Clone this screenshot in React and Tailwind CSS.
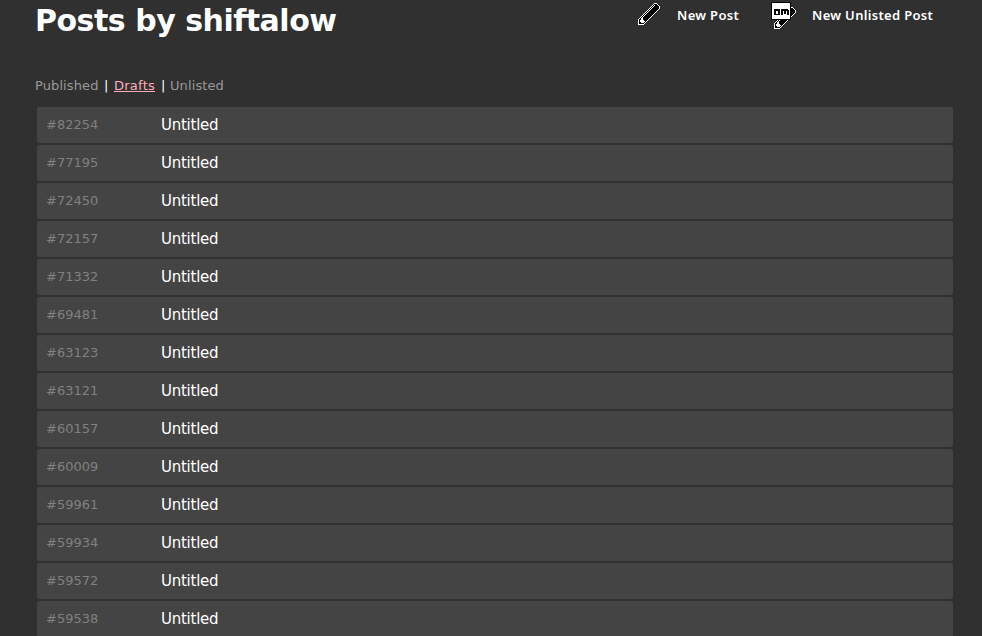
const POSTS = [82254, 77195, 72450, 72157, 71332, 69481, 63123, 63121, 60157, 60009, 59961, 59934, 59572, 59538];

// Pixel icons: "#" is white, "o" is black, a space is empty
const PENCIL = [
    '                ###   ',
    '               #ooo#  ',
    '              #o#ooo# ',
    '             #o#ooooo#',
    '            #o#oooooo#',
    '           #o#ooooooo#',
    '          #o#ooooooo# ',
    '         #o#ooooooo#  ',
    '        #o#ooooooo#   ',
    '       #o#ooooooo#    ',
    '      #o#ooooooo#     ',
    '     #o#ooooooo#      ',
    '    #o#ooooooo#       ',
    '   #o#ooooooo#        ',
    '  #o#ooooooo#         ',
    ' #o##oooooo#          ',
    '#oo##ooooo#           ',
    '#o####ooo#            ',
    '#o#####o#             ',
    '#oo###o#              ',
    '#ooooo#               ',
    '######                ',
];

const KEY_CARD = [
    'oooooooooooooooooooo',
    'o##################o',
    'o##################o',
    'o##################o',
    'o##################o',
    'o##################o',
    'o##################o',
    'o##oooooo#ooooooo##o',
    'o##oooooo#oooooooo#o',
    'o##oo##oo#oo#oo#oo#o',
    'o##oo##oo#oo#oo#oo#o',
    'o##oo##oo#oo#oo#oo#o',
    'o##oooooo#oo####oo#o',
    'o##################o',
    'o##################o',
    'o##################o',
    'o##################o',
    'oooooooooooooooooooo',
];

function Pixels({ rows, left = 0, top = 0 }) {
    return rows.flatMap((row, y) =>
        [...row].map((c, x) => c !== ' ' && (
            <rect key={`${x}-${y}`} x={left + x} y={top + y} width="1" height="1" fill={c === '#' ? '#fff' : '#000'} />
        ))
    );
}

export default function App() {
    return (
        <div className="h-[636px] w-[982px] overflow-hidden bg-[#303030] pr-[29px] pl-[35px] font-['DejaVu_Sans',sans-serif] text-white">
            <header className="flex h-[76px] items-start">
                <h1 className="w-[603px] pt-px text-[30px] leading-[40px] font-bold tracking-[-0.49px] whitespace-nowrap">Posts by shiftalow</h1>
                <a className="flex w-[133px] items-start">
                    <span className="w-[39px] pt-[3px]">
                        <svg width="22" height="22" shapeRendering="crispEdges" className="block">
                            <Pixels rows={PENCIL} />
                        </svg>
                    </span>
                    <span className="pt-[5px] font-['Noto_Sans',sans-serif] text-[13px] leading-5 font-semibold tracking-[0.32px] whitespace-nowrap">New Post</span>
                </a>
                <a className="flex items-start">
                    <span className="w-[41px] pt-[2px]">
                        <svg width="25" height="27" shapeRendering="crispEdges" className="block">
                            <Pixels rows={PENCIL} left={3} top={5} />
                            <Pixels rows={KEY_CARD} />
                        </svg>
                    </span>
                    <span className="pt-[5px] font-['Noto_Sans',sans-serif] text-[13px] leading-5 font-semibold tracking-[0.32px] whitespace-nowrap">New Unlisted Post</span>
                </a>
            </header>

            <nav className="flex h-[31px] text-[13px] leading-5">
                <a className="w-[69px] tracking-[0.1px] text-[#999]">Published</a>
                <span className="w-[10px]">|</span>
                <a className="mr-[6px] w-[41px] tracking-[0.25px] text-[#ffabbc] underline">Drafts</a>
                <span className="w-[9px]">|</span>
                <a className="tracking-[0.1px] text-[#999]">Unlisted</a>
            </nav>

            <ul className="flex flex-col gap-[2px] pl-[2px]">
                {POSTS.map(id => (
                    <li key={id} className="flex h-9 shrink-0 items-center rounded-xs bg-[#444] pl-[9px]">
                        <span className="w-[115px] text-[13px] text-[#808080]">#{id}</span>
                        <span className="text-[15px] tracking-[-0.25px]">Untitled</span>
                    </li>
                ))}
            </ul>
        </div>
    );
}
